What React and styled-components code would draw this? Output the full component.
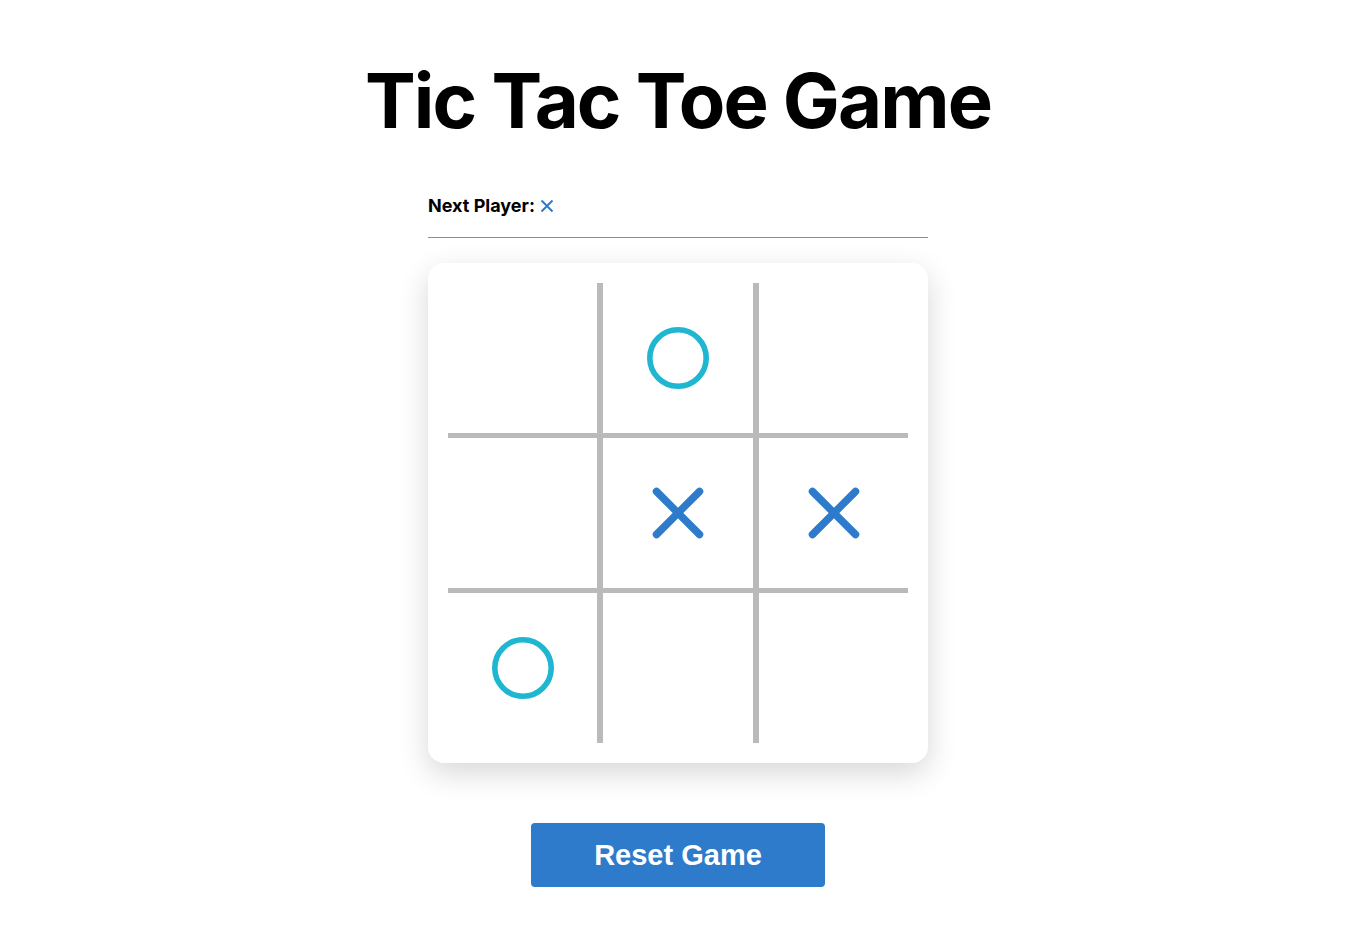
import React, { useState } from "react";
import styled, { createGlobalStyle } from "styled-components";

const GlobalStyle = createGlobalStyle`
  body {
    margin: 0;
    background: #ffffff;
    font-family: Inter, "Noto Sans", sans-serif;
  }
`;

const Page = styled.div`
  display: flex;
  flex-direction: column;
  align-items: center;
  padding-top: 53px;
  padding-left: 5px;
`;

const Title = styled.h1`
  margin: 0;
  font-family: Inter, sans-serif;
  font-size: 76px;
  font-weight: 700;
  line-height: 94px;
  letter-spacing: -1.9px;
  color: #000;
`;

const Game = styled.div`
  width: 500px;
  margin-top: 48px;
  display: flex;
  flex-direction: column;
`;

const Status = styled.div`
  display: flex;
  align-items: center;
  gap: 5px;
  font-size: 18px;
  font-weight: 700;
  line-height: 22px;
  color: #000;
  padding-bottom: 20px;
  border-bottom: 1px solid #8c8c8c;
`;

const Board = styled.div`
  margin-top: 25px;
  height: 500px;
  box-sizing: border-box;
  padding: 20px;
  background: #fff;
  border-radius: 16px;
  box-shadow: 0 10px 30px rgba(0, 0, 0, 0.16);
`;

const Grid = styled.div`
  display: grid;
  grid-template-columns: 149px 150px 149px;
  grid-template-rows: 150px 150px 150px;
  column-gap: 6px;
  row-gap: 5px;
  width: 460px;
  height: 460px;
  background: #bababa;
`;

const Cell = styled.div`
  background: #fff;
  display: flex;
  align-items: center;
  justify-content: center;
  cursor: pointer;
`;

const ResetButton = styled.button`
  margin-top: 60px;
  width: 294px;
  height: 64px;
  border: none;
  border-radius: 4px;
  background: #2f7bcb;
  color: #fff;
  font-family: "Liberation Sans", Arial, sans-serif;
  font-size: 29px;
  font-weight: 700;
  cursor: pointer;
`;

const XMark = ({ size = 52, stroke = 7.5 }) => (
  <svg width={size} height={size} viewBox="0 0 52 52">
    <path
      d="M4.5 4.5 L47.5 47.5 M47.5 4.5 L4.5 47.5"
      stroke="#2e7bcb"
      strokeWidth={stroke}
      strokeLinecap="round"
      fill="none"
    />
  </svg>
);

const OMark = () => (
  <svg width="64" height="64" viewBox="0 0 64 64">
    <circle cx="32" cy="32" r="28.2" stroke="#1eb6d0" strokeWidth="5.6" fill="none" />
  </svg>
);

const initial = [null, "O", null, null, "X", "X", "O", null, null];

export default function App() {
  const [squares, setSquares] = useState(initial);
  const xCount = squares.filter((s) => s === "X").length;
  const oCount = squares.filter((s) => s === "O").length;
  const next = xCount <= oCount ? "X" : "O";

  const play = (i) => {
    if (squares[i]) return;
    const copy = squares.slice();
    copy[i] = next;
    setSquares(copy);
  };

  return (
    <Page>
      <GlobalStyle />
      <Title>Tic Tac Toe Game</Title>
      <Game>
        <Status>
          Next Player:
          {next === "X" ? (
            <svg width="14" height="14" viewBox="0 0 14 14">
              <path d="M1.5 1.5 L12.5 12.5 M12.5 1.5 L1.5 12.5" stroke="#2e7bcb" strokeWidth="2" />
            </svg>
          ) : (
            <svg width="14" height="14" viewBox="0 0 14 14">
              <circle cx="7" cy="7" r="5.5" stroke="#1eb6d0" strokeWidth="2" fill="none" />
            </svg>
          )}
        </Status>
        <Board>
          <Grid>
            {squares.map((s, i) => (
              <Cell key={i} onClick={() => play(i)}>
                {s === "X" && <XMark />}
                {s === "O" && <OMark />}
              </Cell>
            ))}
          </Grid>
        </Board>
      </Game>
      <ResetButton onClick={() => setSquares(Array(9).fill(null))}>Reset Game</ResetButton>
    </Page>
  );
}
